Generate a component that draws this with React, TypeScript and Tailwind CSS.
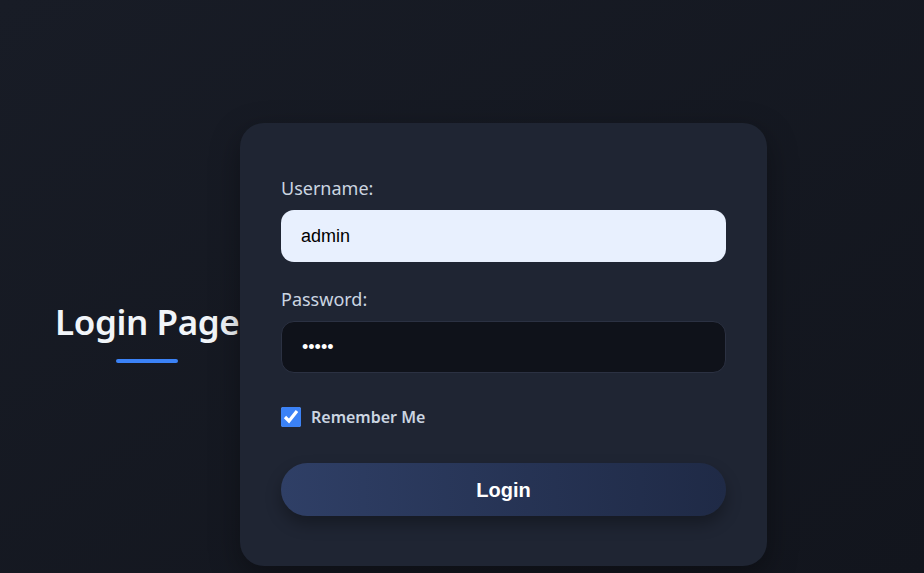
export default function App() {
  return (
    <div
      className="flex min-h-[573px] w-full items-start bg-gradient-to-br from-[#181c26] to-[#12151d] pt-[123px]"
      style={{ fontFamily: '"Noto Sans", "Open Sans", sans-serif' }}
    >
      <div className="flex w-[240px] shrink-0 justify-start pl-[55px] pt-[175px]">
        <div className="flex flex-col items-center">
          <h1 className="whitespace-nowrap text-[35px] font-semibold leading-[48px] tracking-[-0.4px] text-[#f1f5f9]">Login Page</h1>
          <span className="mt-[13px] h-[4px] w-[62px] rounded-full bg-[#3b82f6]" />
        </div>
      </div>

      <form className="w-[527px] shrink-0 rounded-[24px] bg-[#1f2533] px-[41px] pb-[50px] pt-[52px] shadow-[0_10px_30px_rgba(0,0,0,0.35)]">
        <label className="block text-[18px] leading-[27px] text-[#cbd5e1]">Username:</label>
        <input
          defaultValue="admin"
          className="mt-[8px] block h-[52px] w-full rounded-[13px] bg-[#e8f0fe] px-[20px] text-[18px] text-black outline-none"
          style={{ fontFamily: '"Liberation Sans", Arial, sans-serif' }}
        />

        <label className="mt-[24px] block text-[18px] leading-[27px] text-[#cbd5e1]">Password:</label>
        <input
          type="password"
          defaultValue="admin"
          className="mt-[8px] block h-[52px] w-full rounded-[13px] border border-[#2b3142] bg-[#0f121a] px-[20px] text-[18px] text-white outline-none"
          style={{ fontFamily: '"Liberation Sans", Arial, sans-serif' }}
        />

        <label className="mt-[32px] flex items-center gap-[10px]">
          <input type="checkbox" defaultChecked className="h-[20px] w-[20px] accent-[#3b82f6]" />
          <span className="text-[16px] font-semibold text-[#cbd5e1]">Remember Me</span>
        </label>

        <button
          type="button"
          className="mt-[34px] block h-[53px] w-full rounded-full bg-gradient-to-r from-[#2f3f66] to-[#1f2a46] text-[20px] font-bold text-white shadow-[0_8px_16px_rgba(0,0,0,0.3)]"
          style={{ fontFamily: '"Liberation Sans", Arial, sans-serif' }}
        >
          Login
        </button>
      </form>
    </div>
  );
}
